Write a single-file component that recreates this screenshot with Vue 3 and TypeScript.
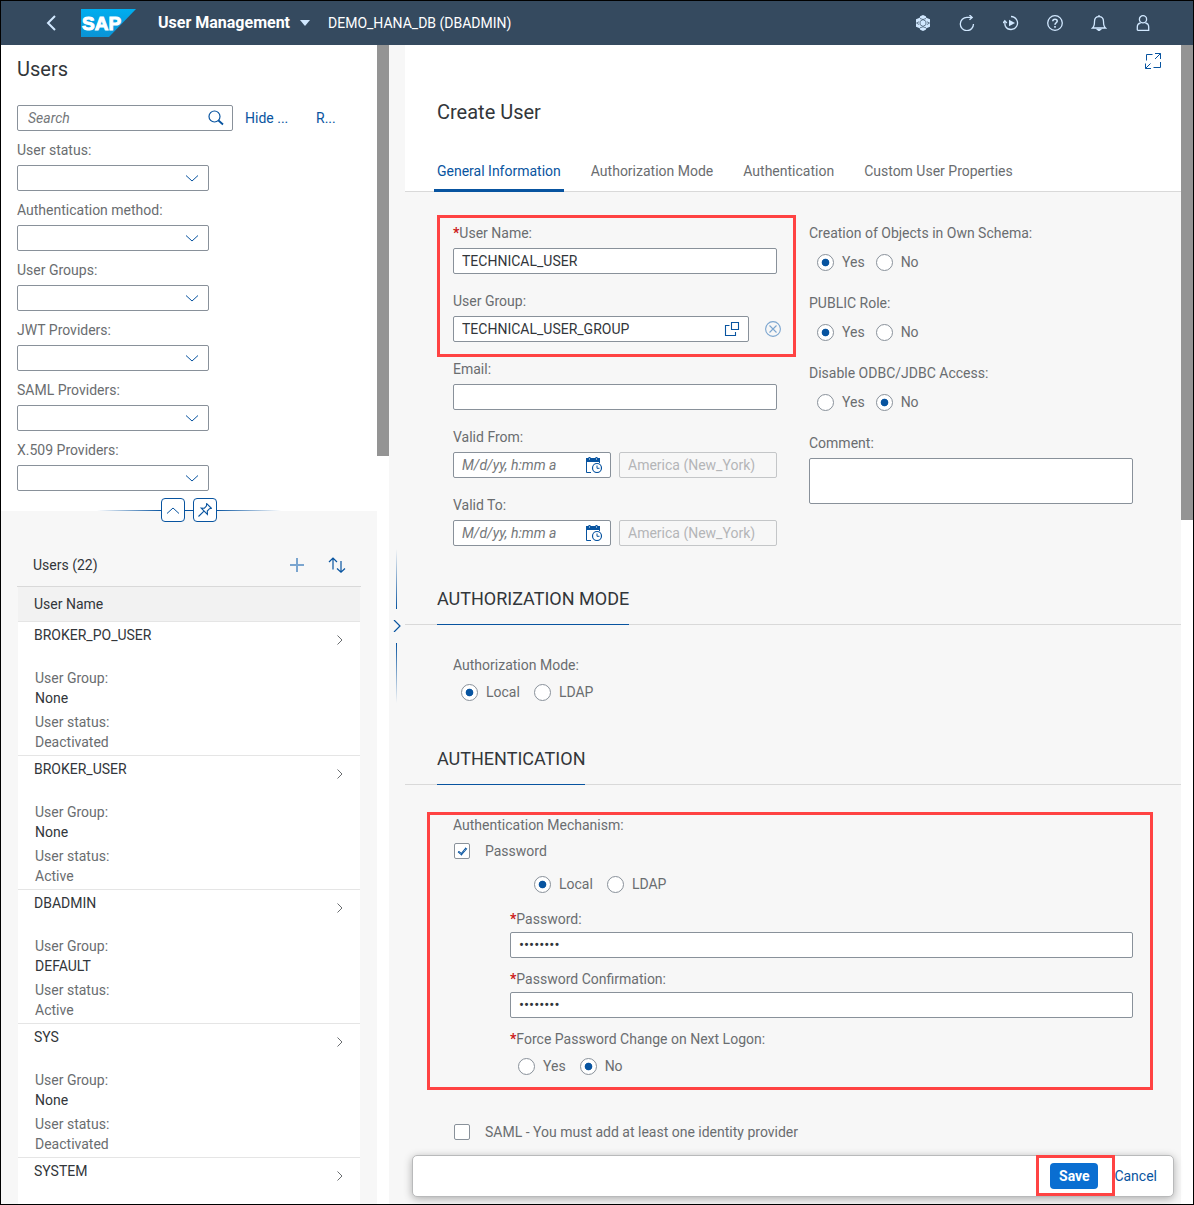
<script setup lang="ts">
import { reactive, ref } from 'vue'

interface Filter {
  id: string
  label: string
}

interface UserDetails {
  group: string
  status: string
}

interface UserRow {
  name: string
  details?: UserDetails
}

const filters: Filter[] = [
  { id: 'status', label: 'User status:' },
  { id: 'method', label: 'Authentication method:' },
  { id: 'groups', label: 'User Groups:' },
  { id: 'jwt', label: 'JWT Providers:' },
  { id: 'saml', label: 'SAML Providers:' },
  { id: 'x509', label: 'X.509 Providers:' },
]

const users: UserRow[] = [
  { name: 'BROKER_PO_USER', details: { group: 'None', status: 'Deactivated' } },
  { name: 'BROKER_USER', details: { group: 'None', status: 'Active' } },
  { name: 'DBADMIN', details: { group: 'DEFAULT', status: 'Active' } },
  { name: 'SYS', details: { group: 'None', status: 'Deactivated' } },
  { name: 'SYSTEM' },
]

const tabs: string[] = ['General Information', 'Authorization Mode', 'Authentication', 'Custom User Properties']
const activeTab = ref<string>(tabs[0])

const form = reactive({
  userName: 'TECHNICAL_USER',
  userGroup: 'TECHNICAL_USER_GROUP',
  email: '',
  validFrom: '',
  validTo: '',
  comment: '',
  ownSchema: 'Yes',
  publicRole: 'Yes',
  disableAccess: 'No',
  authorization: 'Local',
  usePassword: true,
  passwordMode: 'Local',
  password: 'Welcome1',
  confirmation: 'Welcome1',
  forceChange: 'No',
  useSaml: false,
})

type ToggleKey = 'ownSchema' | 'publicRole' | 'disableAccess'
const toggles: { key: ToggleKey; label: string }[] = [
  { key: 'ownSchema', label: 'Creation of Objects in Own Schema:' },
  { key: 'publicRole', label: 'PUBLIC Role:' },
  { key: 'disableAccess', label: 'Disable ODBC/JDBC Access:' },
]

type DateKey = 'validFrom' | 'validTo'
const dates: { key: DateKey; label: string }[] = [
  { key: 'validFrom', label: 'Valid From:' },
  { key: 'validTo', label: 'Valid To:' },
]
</script>

<template>
  <div class="app">
    <header class="shell">
      <button class="shell-btn back" aria-label="Back">
        <svg width="16" height="16" viewBox="0 0 16 16"><path d="M12 1 5 8l7 7" fill="none" stroke="#d1e8ff" stroke-width="2" /></svg>
      </button>
      <svg class="logo" width="55" height="28" viewBox="0 0 55 28" role="img" aria-label="SAP">
        <defs>
          <linearGradient id="logoFill" x1="0" y1="0" x2="0" y2="1">
            <stop offset="0" stop-color="#00aeef" />
            <stop offset="1" stop-color="#0a93d6" />
          </linearGradient>
        </defs>
        <path d="M0 0h55L28 28H0z" fill="url(#logoFill)" />
        <text x="1" y="21" class="logo-text">SAP</text>
      </svg>
      <button class="app-title">
        User Management
        <svg width="10" height="6" viewBox="0 0 10 6"><path d="M0 0h10L5 6z" fill="#d1e8ff" /></svg>
      </button>
      <span class="db-name">DEMO_HANA_DB (DBADMIN)</span>
      <nav class="shell-actions">
        <button class="shell-btn" aria-label="Cockpit">
          <svg width="16" height="16" viewBox="0 0 16 16">
            <path d="M8 0l2.800 1.300.5 1.500 3.700 1.500v7.400l-3.700 1.500-.5 1.500L8 16l-2.800-1.300-.5-1.500L1 11.700V4.300l3.700-1.500.5-1.500z" fill="#d1e8ff" />
            <path d="M8 4.600l2.900 1.700v3.400L8 11.400 5.100 9.700V6.300zM5 3.500l3 1 3-1M1.500 8l2.500-1.200M1.500 8L4 9.500M14.500 8L12 6.800M14.500 8L12 9.500M5 12.800l3-1 3 1" fill="none" stroke="#354a5f" stroke-width=".7" />
          </svg>
        </button>
        <button class="shell-btn" aria-label="Refresh">
          <svg width="16" height="16" viewBox="0 0 16 16" fill="none" stroke="#d1e8ff" stroke-width="1.300">
            <path d="M14.500 9A6.600 6.600 0 1 1 8 2.400h5" /><path d="M10.500 0l2.700 2.400-2.700 2.400" />
          </svg>
        </button>
        <button class="shell-btn" aria-label="Auto refresh">
          <svg width="16" height="16" viewBox="0 0 16 16" fill="none" stroke="#d1e8ff" stroke-width="1.300">
            <path d="M8 1.500a6.500 6.500 0 1 1-5.600 9.800C2 10.500 1.800 9.500 1.800 6" /><path d="M0 8l1.800-2.200L3.800 8" />
            <path d="M6 4.800L12 8l-6 3.200z" fill="#d1e8ff" stroke="none" />
          </svg>
        </button>
        <button class="shell-btn" aria-label="Help">
          <svg width="16" height="16" viewBox="0 0 16 16" fill="none" stroke="#d1e8ff">
            <circle cx="8" cy="8" r="7.300" stroke-width="1.300" />
            <path d="M5.800 6.300C5.800 3.400 10.300 3.600 10.200 6.200 10.100 7.800 8 7.800 8 9.800M8 11v1.700" stroke-width="1.600" />
          </svg>
        </button>
        <button class="shell-btn" aria-label="Notifications">
          <svg width="16" height="16" viewBox="0 0 16 16" fill="none" stroke="#d1e8ff" stroke-width="1.300">
            <path d="M1.500 13C3.300 11.500 3.500 10 3.500 6.500 3.500 3.500 5.300 1.600 8 1.600s4.500 1.900 4.500 4.900c0 3.500.2 5 2 6.500z" />
            <path d="M8 0v1.500M6.500 14.500h3L8 15.700z" />
          </svg>
        </button>
        <button class="shell-btn" aria-label="Profile">
          <svg width="16" height="16" viewBox="0 0 16 16" fill="none" stroke="#d1e8ff" stroke-width="1.300">
            <circle cx="8" cy="4.300" r="3.600" />
            <path d="M2.300 15.300v-3.300c0-2.300 1.300-3.600 3.300-4M10.400 8c2 .4 3.300 1.700 3.300 4v3.300H2.300" />
          </svg>
        </button>
      </nav>
    </header>

    <main class="columns">
      <section class="master">
        <div class="master-content">
          <div class="filter-bar">
            <h1 class="page-title">Users</h1>
            <div class="search-row">
              <div class="control search">
                <input type="search" placeholder="Search" aria-label="Search" />
                <button class="icon-btn" aria-label="Start search">
                  <svg width="16" height="16" viewBox="0 0 16 16" fill="none" stroke="#0854a0"><circle cx="6.500" cy="6.500" r="5.500" stroke-width="1.200" /><path d="M10.500 10.500l4.500 4" stroke-width="1.800" /></svg>
                </button>
              </div>
              <button class="link-btn hide-btn">Hide ...</button>
              <button class="link-btn">R...</button>
            </div>
            <div v-for="f in filters" :key="f.id" class="field filter">
              <label :for="f.id">{{ f.label }}</label>
              <div class="control">
                <select :id="f.id"><option></option></select>
                <svg class="chevron" width="12" height="7" viewBox="0 0 12 7"><path d="M0 .5l6 5.500 6-5.500" fill="none" stroke="#0854a0" /></svg>
              </div>
            </div>
            <div class="toggle-bar">
              <button class="box-btn" aria-label="Collapse header">
                <svg width="12" height="7" viewBox="0 0 12 7"><path d="M0 6.500L6 1l6 5.500" fill="none" stroke="#0854a0" /></svg>
              </button>
              <button class="box-btn" aria-label="Pin header">
                <svg width="14" height="14" viewBox="0 0 14 14" fill="none" stroke="#0854a0"><path d="M8.700.6l4.700 4.700-1.900.4-2.200 2.300.1 3.300L3.200 5.100l3.200.1 2-2.200zM5.700 8.300L.5 13.500" stroke-width="1.100" /></svg>
              </button>
            </div>
          </div>

          <div class="list">
            <div class="list-toolbar">
              <h2>Users (22)</h2>
              <div class="list-actions">
                <button class="icon-btn" aria-label="Add user">
                  <svg width="14" height="14" viewBox="0 0 14 14"><path d="M7 0v14M0 7h14" stroke="#7ba5cf" stroke-width="2" /></svg>
                </button>
                <button class="icon-btn" aria-label="Sort">
                  <svg width="18" height="16" viewBox="0 0 18 16" fill="none" stroke="#0854a0" stroke-width="1.200"><path d="M5 12.500V1M1 5l4-4 4 4M13 4v11M9 11.500l4 3.700 4-3.700" /></svg>
                </button>
              </div>
            </div>
            <table>
              <thead>
                <tr><th scope="col" colspan="2">User Name</th></tr>
              </thead>
              <tbody>
                <tr v-for="u in users" :key="u.name">
                  <td class="user-cell">
                    <p class="user-name">{{ u.name }}</p>
                    <dl v-if="u.details">
                      <dt>User Group:</dt>
                      <dd>{{ u.details.group }}</dd>
                      <dt>User status:</dt>
                      <dd class="status">{{ u.details.status }}</dd>
                    </dl>
                  </td>
                  <td class="nav-cell">
                    <svg width="6" height="10" viewBox="0 0 6 10"><path d="M.5.5L5 5 .5 9.500" fill="none" stroke="#6a6d70" /></svg>
                  </td>
                </tr>
              </tbody>
            </table>
          </div>
        </div>
        <div class="scrollbar"><div class="thumb master-thumb"></div></div>
      </section>

      <div class="splitter">
        <span class="splitter-line"></span>
        <button class="splitter-btn" aria-label="Expand column">
          <svg width="8" height="12" viewBox="0 0 8 12"><path d="M1 0l6 6-6 6" fill="none" stroke="#0854a0" stroke-width="1.200" /></svg>
        </button>
        <span class="splitter-line down"></span>
      </div>

      <section class="detail">
        <div class="detail-content">
          <div class="detail-header">
            <button class="icon-btn expand" aria-label="Full screen">
              <svg width="16" height="16" viewBox="0 0 16 16" fill="none" stroke="#0854a0">
                <path d="M1.500 7.500V1.500h6M10 .5h5.500V6M15.500.5L10 6M15.500 9v5.500H8.500M.5 10.500v5H6M.5 15.500L5.500 10.500" />
              </svg>
            </button>
            <h1 class="page-title">Create User</h1>
            <nav class="tabs">
              <button v-for="t in tabs" :key="t" class="tab" :class="{ active: t === activeTab }" @click="activeTab = t">{{ t }}</button>
            </nav>
          </div>

          <div class="body general">
            <div class="col">
              <div class="marked marked-name">
                <div class="field">
                  <label for="user-name" class="required">User Name:</label>
                  <div class="control"><input id="user-name" v-model="form.userName" type="text" /></div>
                </div>
                <div class="field">
                  <label for="user-group">User Group:</label>
                  <div class="group-row">
                    <div class="control">
                      <input id="user-group" v-model="form.userGroup" type="text" />
                      <button class="icon-btn" aria-label="Choose group">
                        <svg width="16" height="16" viewBox="0 0 16 16" fill="none" stroke="#0854a0" stroke-width="1.100"><path d="M7.500 1.500h7v7h-7zM5.500 4.500H1.500v10h10V11" /></svg>
                      </button>
                    </div>
                    <button class="clear-btn" aria-label="Clear group">
                      <svg width="16" height="16" viewBox="0 0 16 16" fill="none" stroke="#7ba5cf" stroke-width="1.100"><circle cx="8" cy="8" r="7.400" /><path d="M4.500 4.500l7 7M11.500 4.500l-7 7" /></svg>
                    </button>
                  </div>
                </div>
              </div>
              <div class="field">
                <label for="email">Email:</label>
                <div class="control"><input id="email" v-model="form.email" type="email" /></div>
              </div>
              <div v-for="d in dates" :key="d.key" class="field">
                <label :for="d.key">{{ d.label }}</label>
                <div class="date-row">
                  <div class="control">
                    <input :id="d.key" v-model="form[d.key]" type="text" placeholder="M/d/yy, h:mm a" />
                    <button class="icon-btn" aria-label="Open picker">
                      <svg width="16" height="16" viewBox="0 0 16 16" fill="none" stroke="#0854a0">
                        <path d="M0 1h2.500V0h2v1h5V0h2v1H14v4H0z" fill="#0854a0" stroke="none" />
                        <path d="M3 2h1M10 2h1" stroke="#fff" />
                        <path d="M.5 4v11.500H5M13.500 4v2" />
                        <circle cx="11" cy="11" r="4.500" stroke-width="1.200" /><path d="M11 8.500V11.300h2.500" />
                      </svg>
                    </button>
                  </div>
                  <div class="control disabled">
                    <input type="text" value="America (New_York)" disabled aria-label="Time zone" />
                  </div>
                </div>
              </div>
            </div>

            <div class="col">
              <fieldset v-for="t in toggles" :key="t.key" class="field">
                <legend>{{ t.label }}</legend>
                <div class="radios tight">
                  <label v-for="o in ['Yes', 'No']" :key="o"><input v-model="form[t.key]" type="radio" :name="t.key" :value="o" />{{ o }}</label>
                </div>
              </fieldset>
              <div class="field">
                <label for="comment">Comment:</label>
                <textarea id="comment" v-model="form.comment"></textarea>
              </div>
            </div>
          </div>

          <div class="section-head"><h2>AUTHORIZATION MODE</h2></div>
          <div class="body">
            <fieldset class="field compact">
              <legend>Authorization Mode:</legend>
              <div class="radios">
                <label v-for="o in ['Local', 'LDAP']" :key="o"><input v-model="form.authorization" type="radio" name="authorization" :value="o" />{{ o }}</label>
              </div>
            </fieldset>
          </div>

          <div class="section-head"><h2>AUTHENTICATION</h2></div>
          <div class="body">
            <div class="marked marked-auth">
              <p class="caption">Authentication Mechanism:</p>
              <label class="check"><input v-model="form.usePassword" type="checkbox" />Password</label>
              <div class="nested">
                <div class="radios mode">
                  <label v-for="o in ['Local', 'LDAP']" :key="o"><input v-model="form.passwordMode" type="radio" name="passwordMode" :value="o" />{{ o }}</label>
                </div>
                <div class="field compact">
                  <label for="password" class="required">Password:</label>
                  <div class="control"><input id="password" v-model="form.password" type="password" /></div>
                </div>
                <div class="field compact">
                  <label for="confirmation" class="required">Password Confirmation:</label>
                  <div class="control"><input id="confirmation" v-model="form.confirmation" type="password" /></div>
                </div>
                <fieldset class="field compact">
                  <legend class="required">Force Password Change on Next Logon:</legend>
                  <div class="radios">
                    <label v-for="o in ['Yes', 'No']" :key="o"><input v-model="form.forceChange" type="radio" name="forceChange" :value="o" />{{ o }}</label>
                  </div>
                </fieldset>
              </div>
            </div>
            <label class="check saml"><input v-model="form.useSaml" type="checkbox" />SAML - You must add at least one identity provider</label>
          </div>
        </div>

        <footer class="actions">
          <div class="marked marked-save"><button class="save">Save</button></div>
          <button class="cancel">Cancel</button>
        </footer>
        <div class="scrollbar"><div class="thumb detail-thumb"></div></div>
      </section>
    </main>
  </div>
</template>

<style>
body {
  margin: 0;
}
</style>

<style scoped>
.app,
.app * {
  box-sizing: border-box;
}

.app {
  display: flex;
  flex-direction: column;
  height: 100vh;
  border: 1px solid #000;
  overflow: hidden;
  background: #f7f7f7;
  color: #32363a;
  font-family: Roboto, 'Liberation Sans', sans-serif;
  font-size: 14px;
  line-height: 18px;
}

h1,
h2,
p,
dl,
dd {
  margin: 0;
  font-weight: 400;
}

button,
input,
select,
textarea {
  margin: 0;
  padding: 0;
  border: 0;
  background: none;
  color: inherit;
  font: inherit;
}

button {
  display: flex;
  align-items: center;
  justify-content: center;
  flex: none;
  cursor: pointer;
}

svg {
  display: block;
  flex: none;
}

/* Shell bar */
.shell {
  display: flex;
  align-items: center;
  flex: none;
  height: 44px;
  padding: 0 28px 0 32px;
  background: #354a5f;
  color: #fff;
}

.shell-btn {
  width: 44px;
  height: 44px;
}

.back {
  width: 36px;
}

.logo {
  margin-left: 12px;
}

.logo-text {
  fill: #fff;
  stroke: #fff;
  font: bold 19px 'Liberation Sans', sans-serif;
}

.app-title {
  gap: 10px;
  margin: 0 18px 0 22px;
  font-size: 16px;
  font-weight: 700;
}

.shell-actions {
  display: flex;
  margin-left: auto;
}

/* Columns */
.columns {
  display: flex;
  flex: 1;
  min-height: 0;
}

.master {
  display: flex;
  flex: none;
  width: 388px;
}

.master-content {
  flex: 1;
  overflow: hidden;
}

.scrollbar {
  flex: none;
  width: 12px;
  background: #fff;
}

.thumb {
  background: #949494;
}

.master-thumb {
  height: 411px;
}

.detail-thumb {
  height: 475px;
}

.page-title {
  font-size: 20px;
  line-height: 24px;
}

/* Filters */
.filter-bar {
  position: relative;
  display: flex;
  flex-direction: column;
  gap: 10px;
  padding: 12px 16px 20px;
  background: #fff;
}

.search-row {
  display: flex;
  align-items: center;
  margin-top: 14px;
}

.link-btn {
  margin-left: 12px;
  color: #0854a0;
}

.hide-btn {
  justify-content: flex-start;
  width: 59px;
}

.filter {
  width: 192px;
}

.field {
  display: flex;
  flex-direction: column;
  gap: 6px;
  min-width: 0;
  margin: 0;
  padding: 0;
  border: 0;
  color: #6a6d70;
}

.compact {
  gap: 4px;
}

legend {
  float: left;
  padding: 0;
}

.required::before {
  content: '*';
  color: #cc1919;
  font-weight: 700;
}

.control {
  position: relative;
  display: flex;
  align-items: center;
  flex: 1 1 auto;
  min-width: 0;
  height: 26px;
  border: 1px solid #89919a;
  border-radius: 2px;
  background: #fff;
  color: #32363a;
}

.search {
  flex: none;
  width: 216px;
}

.control input,
.control select {
  flex: 1;
  width: 0;
  min-width: 0;
  height: 24px;
  padding: 0 8px;
  outline: 0;
  appearance: none;
}

.control input[type='search'] {
  padding-left: 10px;
}

.control input[type='password'] {
  font-size: 15px;
}

.control input::placeholder {
  color: #74777a;
  font-style: italic;
  opacity: 1;
}

.control .chevron {
  position: absolute;
  right: 10px;
  pointer-events: none;
}

.control .icon-btn {
  width: 32px;
  height: 24px;
}

.control.disabled {
  border-color: #c4c6c8;
  background: #f7f7f7;
  color: #b4b5b7;
}

.toggle-bar {
  position: absolute;
  right: 0;
  bottom: -11px;
  left: 0;
  display: flex;
  justify-content: center;
  gap: 8px;
  width: 184px;
  margin: 0 auto;
  background: linear-gradient(90deg, transparent, #0854a0 35%, #0854a0 65%, transparent) center / 100% 1px no-repeat;
}

.box-btn {
  width: 24px;
  height: 24px;
  border: 1px solid #0854a0;
  border-radius: 4px;
  background: #fff;
}

/* User list */
.list {
  padding: 33px 16px 0;
}

.list-toolbar {
  display: flex;
  align-items: center;
  justify-content: space-between;
  height: 43px;
  padding: 0 8px 0 16px;
  border-bottom: 1px solid #d9d9d9;
}

.list-toolbar h2 {
  font-size: 14px;
}

.list-actions {
  display: flex;
  gap: 8px;
}

.list-actions .icon-btn {
  width: 32px;
  height: 26px;
}

table {
  width: calc(100% - 2px);
  margin: 0 1px;
  border-spacing: 0;
  background: #fff;
}

th {
  height: 35px;
  padding: 0 16px;
  border-bottom: 1px solid #e5e5e5;
  background: #f2f2f2;
  font-weight: 400;
  text-align: left;
}

td {
  padding: 3px 0;
  border-bottom: 1px solid #e5e5e5;
  line-height: 20px;
  vertical-align: top;
}

.user-cell {
  padding-left: 16px;
}

.nav-cell {
  width: 23px;
  padding-top: 13px;
}

.user-name {
  margin-bottom: 23px;
}

dl {
  padding-left: 1px;
}

dt,
.status {
  color: #6a6d70;
}

dd + dt {
  margin-top: 4px;
}

/* Splitter */
.splitter {
  display: flex;
  flex-direction: column;
  align-items: center;
  flex: none;
  gap: 10px;
  width: 16px;
  padding: 504px 1px 0 0;
}

.splitter-line {
  width: 1px;
  height: 60px;
  background: linear-gradient(transparent, #0854a0);
}

.down {
  background: linear-gradient(#0854a0, transparent);
}

.splitter-btn {
  width: 15px;
  height: 14px;
}

/* Detail */
.detail {
  position: relative;
  display: flex;
  flex: 1;
  min-width: 0;
}

.detail-content {
  flex: 1;
  min-width: 0;
  overflow: hidden;
}

.detail-header {
  display: flex;
  flex-direction: column;
  height: 147px;
  padding: 0 16px 0 32px;
  border-bottom: 1px solid #d9d9d9;
  background: #fff;
}

.expand {
  align-self: flex-end;
  width: 24px;
  height: 32px;
}

.detail-header .page-title {
  margin: 23px 0 32px;
}

.tabs {
  display: flex;
  gap: 24px;
  margin-left: -3px;
}

.tab {
  align-items: flex-start;
  height: 36px;
  padding: 6px 3px 0;
  border-bottom: 3px solid transparent;
  color: #6a6d70;
}

.tab.active {
  border-color: #0854a0;
  border-radius: 2px 2px 0 0;
  color: #0854a0;
}

.body {
  padding: 31px 48px 41px;
}

.general {
  display: grid;
  grid-template-columns: 1fr 1fr;
  gap: 32px;
  padding-top: 32px;
}

.col {
  display: flex;
  flex-direction: column;
  gap: 18px;
  min-width: 0;
}

.marked {
  position: relative;
}

.marked::after {
  content: '';
  position: absolute;
  border: 3px solid #ff4343;
  pointer-events: none;
}

.marked-name {
  display: flex;
  flex-direction: column;
  gap: 18px;
}

.marked-name::after {
  inset: -9px -19px -15px -16px;
}

.marked-auth::after {
  inset: -4px -20px -10px -26px;
}

.marked-save::after {
  inset: -8px -17px -7px -14px;
}

.group-row,
.date-row {
  display: flex;
  gap: 8px;
}

.date-row .control {
  flex: 1 1 0;
}

.clear-btn {
  width: 32px;
  height: 26px;
  margin-right: -12px;
}

textarea {
  height: 46px;
  padding: 4px 8px;
  border: 1px solid #89919a;
  border-radius: 2px;
  background: #fff;
  color: #32363a;
  resize: none;
}

.radios {
  display: flex;
  align-items: center;
  gap: 14px;
  height: 28px;
  padding-left: 8px;
  color: #6a6d70;
}

.radios.tight {
  gap: 11px;
}

.radios.mode {
  padding-left: 24px;
}

.radios label,
.check {
  display: flex;
  align-items: center;
  gap: 8px;
}

input[type='radio'] {
  width: 17px;
  height: 17px;
  border: 1px solid #89919a;
  border-radius: 50%;
  background: #fff;
  appearance: none;
}

input[type='radio']:checked {
  background: radial-gradient(circle closest-side, #0854a0 46%, #fff 56%);
}

input[type='checkbox'] {
  display: flex;
  justify-content: center;
  width: 16px;
  height: 16px;
  border: 1px solid #89919a;
  border-radius: 2px;
  background: #fff;
  appearance: none;
}

input[type='checkbox']:checked::before {
  content: '';
  width: 4px;
  height: 8px;
  margin-top: 2px;
  border: solid #0854a0;
  border-width: 0 1px 1px 0;
  box-shadow: inset -1px -1px #0854a0;
  transform: rotate(40deg);
}

.section-head {
  padding: 0 32px;
  border-bottom: 1px solid #d9d9d9;
}

.section-head h2 {
  width: fit-content;
  margin-bottom: -1px;
  padding-bottom: 13px;
  border-bottom: 1px solid #0854a0;
  font-size: 18px;
  line-height: 24px;
}

.caption {
  margin-bottom: 4px;
  color: #6a6d70;
}

.check {
  gap: 15px;
  height: 26px;
  padding-left: 1px;
  color: #6a6d70;
}

.nested {
  display: flex;
  flex-direction: column;
  gap: 12px;
  margin: 6px 0 0 57px;
}

.saml {
  margin-top: 39px;
}

/* Footer */
.actions {
  position: absolute;
  right: 19px;
  bottom: 7px;
  left: 7px;
  display: flex;
  align-items: center;
  justify-content: flex-end;
  gap: 8px;
  height: 42px;
  padding: 0 8px;
  border: 1px solid #b9babb;
  border-radius: 5px;
  background: #fff;
  box-shadow: 0 2px 8px rgba(0, 0, 0, 0.3);
}

.save,
.cancel {
  min-width: 48px;
  height: 26px;
  padding: 0 8px;
  border-radius: 4px;
  color: #0854a0;
}

.save {
  background: #0a6ed1;
  color: #fff;
  font-weight: 700;
}
</style>
